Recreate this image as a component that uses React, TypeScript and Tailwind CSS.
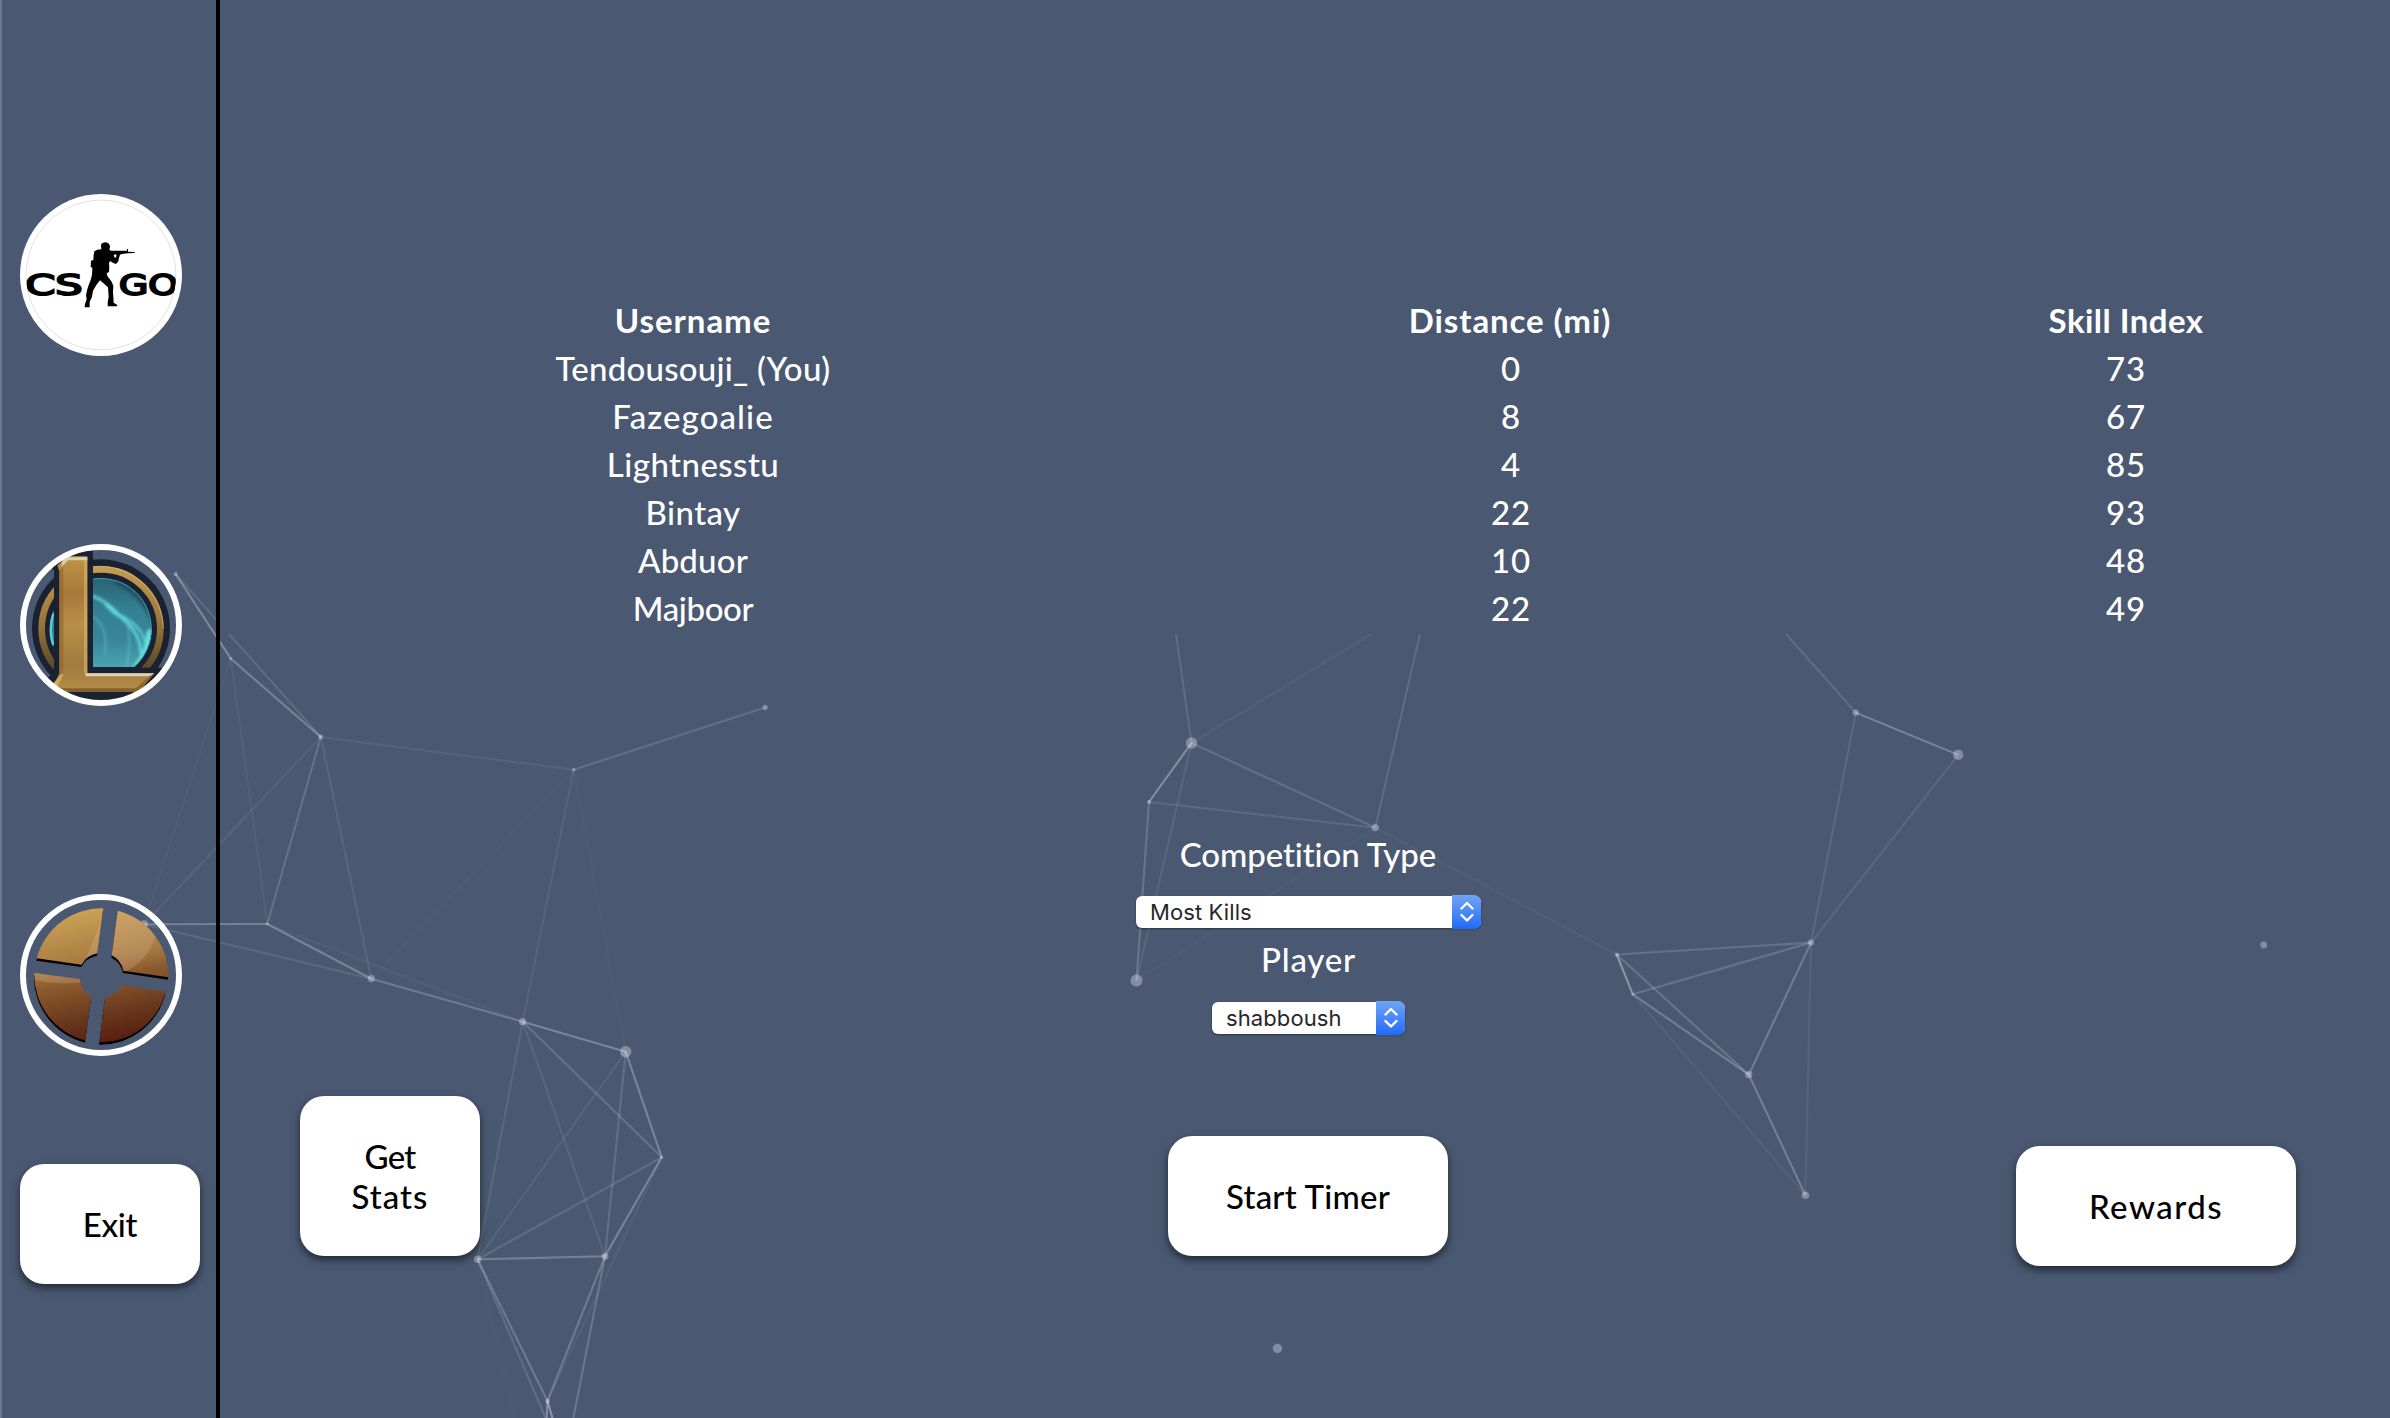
import React from "react";

type Point = [number, number];

const NODES: Record<string, Point> = {
  A: [175.6, 574], B: [230.8, 658.6], C: [320.8, 737], D: [573.7, 769.7], E: [765.2, 707.4],
  F: [267.3, 924], G: [371.3, 978.7], H: [144, 924.3], I: [522.7, 1021.7], J: [625.7, 1051.7],
  K: [661.7, 1157.3], L: [477.6, 1259.3], M: [605, 1256.3], N: [547.5, 1401], P: [1191.5, 743],
  Q: [1149, 802], R: [1375.3, 827.7], S: [1136.5, 980.5], T: [1616.7, 954.5], U: [1632.8, 994.3],
  V: [1811, 942.6], W: [1748.8, 1074.7], X: [1805.4, 1195.2], Y: [1855.8, 712.6], Z: [1958.3, 754.9],
  a: [2263.7, 945], b: [1277.4, 1348.5], p1: [1176, 634], p2: [1371.7, 634], p3: [1420, 634],
  p4: [1786, 634], o1: [546.5, 1420], o2: [553, 1420], o3: [573, 1420], o4: [515, 1420],
};

const DOTS: [string, number][] = [
  ["A", 2], ["B", 1.3], ["C", 2.4], ["D", 1.8], ["E", 2.6], ["F", 1.3], ["G", 3.6], ["H", 4], ["I", 3.6],
  ["J", 5.7], ["K", 1.5], ["L", 3.7], ["M", 3.4], ["N", 2.3], ["P", 5.7], ["Q", 2], ["R", 3.6], ["S", 6],
  ["T", 2], ["U", 1.2], ["V", 3.1], ["W", 3.6], ["X", 3.8], ["Y", 3.1], ["Z", 5.1], ["a", 3.4], ["b", 4.7],
];

const LINKS = "AB AC BC CD DE CH CF CG BF BH HF HG FG FI GI DG DI DJ IJ IK IL IM JK JL JM KL KM KN LM LN MN PQ PR QR QS PS RS RT TU TV TW UV UW UX VW VX WX VY VZ YZ".split(" ");

const EDGE_LINKS: [string, string, number][] = [
  ["P", "p1", 0.12], ["P", "p2", 0.05], ["R", "p3", 0.12], ["Y", "p4", 0.12],
  ["L", "o1", 0.13], ["L", "o4", 0.02], ["N", "o1", 0.3], ["N", "o2", 0.36], ["M", "o3", 0.18],
];

function Network() {
  return (
    <svg className="pointer-events-none absolute inset-0" width="2390" height="1418" viewBox="0 0 2390 1418">
      <g stroke="#fff" strokeWidth="2.1">
        {LINKS.map((k) => {
          const [x1, y1] = NODES[k[0]];
          const [x2, y2] = NODES[k[1]];
          const o = Math.max(0.018, 0.42 * (1 - Math.hypot(x1 - x2, y1 - y2) / 305));
          return <line key={k} x1={x1} y1={y1} x2={x2} y2={y2} strokeOpacity={o} />;
        })}
        {EDGE_LINKS.map(([p, q, o]) => (
          <line key={p + q} x1={NODES[p][0]} y1={NODES[p][1]} x2={NODES[q][0]} y2={NODES[q][1]} strokeOpacity={o} />
        ))}
      </g>
      <g fill="#fff" fillOpacity="0.32">
        {DOTS.map(([k, r]) => (
          <circle key={k} cx={NODES[k][0]} cy={NODES[k][1]} r={r} />
        ))}
      </g>
    </svg>
  );
}

function CsgoLogo() {
  return (
    <svg className="block size-full" viewBox="60 42 486 486">
      <circle cx="303" cy="285" r="243" fill="#fff" />
      <circle cx="303" cy="285" r="224.5" fill="none" stroke="#c4c7d2" strokeWidth="1.6" />
      <clipPath id="cs"><circle cx="303" cy="285" r="225" /></clipPath>
      <g clipPath="url(#cs)" fontFamily="DejaVu Sans" fontSize="86" fill="#000" stroke="#000" strokeWidth="6">
        <text x="76" y="345" textLength="172" lengthAdjust="spacingAndGlyphs">CS</text>
        <text x="357" y="345" textLength="177" lengthAdjust="spacingAndGlyphs">GO</text>
      </g>
      <path d="M303 196 C304 189 310 187 317 187 C325 188 330 193 330 201 L328 210 L334 212 L381 212 L381 207 L384 207 L384 215 L404 216 L404 219 L384 220 L366 222 L360 224 L357 234 L355 244 L348 252 L340 249 L330 243 L327 250 L328 262 L327 276 L320 280 L322 288 L334 304 L340 317 L339 336 L340 352 L341 368 L352 375 L351 379 L323 379 L323 368 L326 350 L324 322 L312 311 L300 301 L289 315 L279 332 L276 350 L269 366 L269 382 L254 382 L255 372 L260 358 L258 346 L262 328 L266 315 L272 300 L276 284 L277 263 L272 261 L273 242 L280 240 L281 225 L283 214 L292 209 L304 208 Z M341 226 L347 222 L350 228 L345 235 Z" fillRule="evenodd" />
    </svg>
  );
}

function LeagueLogo() {
  return (
    <svg className="block size-full" viewBox="60 42 486 486">
      <defs>
        <clipPath id="lc"><circle cx="303" cy="285" r="227" /></clipPath>
        <linearGradient id="ring" x1="0" y1="0" x2="0" y2="1">
          <stop offset="0" stopColor="#c39a50" /><stop offset="0.5" stopColor="#94703a" /><stop offset="0.85" stopColor="#554828" />
        </linearGradient>
        <linearGradient id="orb" x1="0" y1="0" x2="0" y2="1">
          <stop offset="0" stopColor="#2a6273" /><stop offset="0.3" stopColor="#348093" /><stop offset="0.6" stopColor="#3a8496" /><stop offset="0.9" stopColor="#4aa6b2" />
        </linearGradient>
        <linearGradient id="gold" x1="0" y1="0" x2="0" y2="1">
          <stop offset="0" stopColor="#be9546" /><stop offset="0.27" stopColor="#a87839" /><stop offset="0.5" stopColor="#b98e49" /><stop offset="0.8" stopColor="#a17b40" /><stop offset="1" stopColor="#b38c48" />
        </linearGradient>
        <clipPath id="oc"><path d="M278 144 H460 V411 H278 Z" /></clipPath>
        <clipPath id="ob"><circle cx="303" cy="296" r="152" /></clipPath>
        <filter id="soft"><feGaussianBlur stdDeviation="4" /></filter>
      </defs>
      <g clipPath="url(#lc)">
        <circle cx="303" cy="295" r="207" fill="#1a2232" />
        <circle cx="303" cy="296" r="178" fill="none" stroke="url(#ring)" strokeWidth="20" />
        <path d="M278 110 C395 98 488 190 490 296" fill="none" stroke="#dcbc7c" strokeWidth="2" />
        <circle cx="303" cy="296" r="152" fill="url(#orb)" />
        <g clipPath="url(#oc)">
          <g clipPath="url(#ob)">
            <path d="M360 130 C430 170 462 230 460 290 C440 240 410 190 340 160 Z" fill="#1d4a5c" opacity="0.8" filter="url(#soft)" />
            <g fill="none" stroke="#62e0e0" filter="url(#soft)" strokeLinecap="round">
              <path d="M276 198 C325 214 350 250 378 275 C415 310 425 345 425 400" strokeWidth="8" />
              <path d="M320 225 C340 245 345 250 360 258" strokeWidth="10" />
              <path d="M340 248 C405 270 434 310 436 345" strokeWidth="6" />
              <path d="M276 260 C312 275 322 320 314 370" strokeWidth="4" opacity="0.6" />
              <path d="M385 290 C392 340 386 380 380 411" strokeWidth="4" opacity="0.6" />
              <path d="M452 310 C450 350 440 380 412 411" strokeWidth="26" />
            </g>
            <circle cx="303" cy="296" r="151" fill="none" stroke="#45a6b5" strokeWidth="3" />
          </g>
        </g>
        <path d="M160 250 C149 280 150 320 160 345" fill="none" stroke="#56d0d8" strokeWidth="7" />
        <path d="M158 62 H279 V411 H405 L431 413 H500 L440 530 H120 L146 440 L162 430 V120 H158 Z" fill="#1a2232" />
        <path d="M172 107 L200 79 H262 V430 H463 L416 486 H175 L160 467 L178 430 V122 Z" fill="url(#gold)" />
        <path d="M190 82 H262 V91 H205 L184 110 Z" fill="#ddd0ae" />
        <path d="M262 84 V430 H252 V92 Z" fill="#d8b670" opacity="0.6" />
        <path d="M255 430 H463 L450 439 H258 Z" fill="#e0d3b4" />
        <path d="M178 120 L190 112 V430 L178 445 Z" fill="#93692f" opacity="0.7" />
        <path d="M178 475 H424 L416 486 H175 Z" fill="#86602c" />
        <path d="M463 430 L416 486 L408 474 L448 439 Z" fill="#8f6530" />
        <path d="M160 460 L186 430 L190 436 L170 474 Z" fill="#cfa860" />
      </g>
      <circle cx="303" cy="285" r="234" fill="none" stroke="#fff" strokeWidth="18" />
    </svg>
  );
}

function FortressLogo() {
  const shape =
    "M310 85 A202 202 0 0 0 110 235 L245 254 A66 66 0 0 1 292 220 Z M353 92 A202 202 0 0 1 505 292 L370 272 A66 66 0 0 0 335 226 Z M103 279 L239 297 A66 66 0 0 0 274 348 L256 481 A202 202 0 0 1 103 279 Z M365 316 L497 334 A200 200 0 0 1 298 487 L315 352 A66 66 0 0 0 365 316 Z";
  return (
    <svg className="block size-full" viewBox="60 42 486 486">
      <defs>
        <linearGradient id="tf" gradientUnits="userSpaceOnUse" x1="260" y1="85" x2="340" y2="487">
          <stop offset="0" stopColor="#cca254" /><stop offset="0.38" stopColor="#a87a42" /><stop offset="0.52" stopColor="#8b5b2d" /><stop offset="0.75" stopColor="#6e3c20" /><stop offset="1" stopColor="#561d12" />
        </linearGradient>
        <clipPath id="tc"><path d={shape} /></clipPath>
        <filter id="blur"><feGaussianBlur stdDeviation="2.2" /></filter>
      </defs>
      <path d={shape} fill="#000" transform="translate(-1 7)" filter="url(#blur)" />
      <path d={shape} fill="url(#tf)" />
      <path d="M330 60 H440 C480 120 475 160 455 195 C435 240 405 266 360 280 C250 320 170 314 90 298 V255 H250 Z" fill="#e0c0a8" opacity="0.24" clipPath="url(#tc)" />
      <circle cx="303" cy="285" r="234" fill="none" stroke="#fff" strokeWidth="18" />
    </svg>
  );
}

function Button({ className, children }: { className: string; children: React.ReactNode }) {
  return (
    <button
      className={`flex shrink-0 items-center justify-center rounded-[24px] bg-white text-[33px] leading-10 font-medium text-black shadow-[0_4px_8px_rgba(0,0,0,0.55)] ${className}`}
    >
      {children}
    </button>
  );
}

function Select({ value, className }: { value: string; className: string }) {
  return (
    <div className={`relative flex h-8 items-center rounded-[6px] bg-white pl-3.5 font-['Inter'] text-[22px] leading-8 font-normal text-[#262626] shadow-[0_1px_2px_rgba(0,0,0,0.45)] ${className}`}>
      {value}
      <div className="absolute -top-px right-0 flex h-[34px] w-[29px] items-center justify-center rounded-r-[7px] bg-linear-to-b from-[#6fa3f5] to-[#216af8]">
        <svg width="14" height="22" viewBox="0 0 14 22" fill="none" stroke="#fff" strokeWidth="2.4" strokeLinecap="round" strokeLinejoin="round">
          <path d="M1.5 7.5 L7 2 L12.5 7.5 M1.5 14 L7 19.5 L12.5 14" />
        </svg>
      </div>
    </div>
  );
}

const ROWS: [string, string, string, string][] = [
  ["Tendousouji_ (You)", "0", "73", "tracking-[0.24px]"],
  ["Fazegoalie", "8", "67", "tracking-[1.1px]"],
  ["Lightnesstu", "4", "85", "tracking-[0.45px]"],
  ["Bintay", "22", "93", "tracking-[0.43px]"],
  ["Abduor", "10", "48", "tracking-[0.18px]"],
  ["Majboor", "22", "49", "tracking-[-0.35px]"],
];

export default function App() {
  return (
    <div className="relative flex h-[1418px] w-[2390px] overflow-hidden bg-[#4a5872] font-['Lato',sans-serif] text-[33px] font-medium text-white">
      <Network />
      <aside className="relative flex w-[220px] shrink-0 flex-col border-r-4 border-l-2 border-r-black border-l-[#6d788e] pt-[194px] pl-[18px]">
        <div className="flex flex-col gap-[188px]">
          <div className="size-[162px]"><CsgoLogo /></div>
          <div className="size-[162px]"><LeagueLogo /></div>
          <div className="size-[162px]"><FortressLogo /></div>
        </div>
        <Button className="mt-[108px] h-[120px] w-[180px] tracking-[-0.35px]">Exit</Button>
      </aside>

      <main className="relative flex-1">
        <section className="h-[634px] bg-[#4a5872] pt-[296px]">
          <table className="w-full table-fixed text-center leading-[48px]">
            <colgroup>
              <col className="w-[946px]" />
              <col className="w-[688px]" />
              <col />
            </colgroup>
            <thead>
              <tr className="h-12">
                <th className="p-0 font-bold tracking-[0.98px]">Username</th>
                <th className="p-0 font-bold tracking-[0.9px]">Distance (mi)</th>
                <th className="p-0 pl-2 font-bold tracking-[0.46px]">Skill Index</th>
              </tr>
            </thead>
            <tbody>
              {ROWS.map(([name, distance, skill, spacing]) => (
                <tr key={name} className="h-12">
                  <td className={`p-0 ${spacing}`}>{name}</td>
                  <td className="p-0 pl-0.5 tracking-[0.8px]">{distance}</td>
                  <td className="p-0 pl-2 tracking-[0.8px]">{skill}</td>
                </tr>
              ))}
            </tbody>
          </table>
        </section>

        <section className="flex items-start pr-[94px] pl-20">
          <Button className="mt-[462px] h-40 w-[180px] px-10">
            <span>
              <span className="tracking-[-0.7px]">Get</span> <br />
              <span className="tracking-[1.06px]">Stats</span>
            </span>
          </Button>
          <div className="ml-[656px] flex w-[345px] flex-col items-center pt-[200px]">
            <label className="pr-px leading-10 tracking-[-0.1px]">Competition Type</label>
            <Select value="Most Kills" className="mt-[22px] w-[345px] tracking-[0.1px]" />
            <label className="mt-[11px] leading-10 tracking-[0.85px]">Player</label>
            <Select value="shabboush" className="mt-[23px] w-[193px] tracking-[0.1px]" />
            <Button className="mt-[102px] mr-px h-[120px] w-[280px] tracking-[0.24px]">Start Timer</Button>
          </div>
          <Button className="mt-[512px] ml-auto h-[120px] w-[280px] tracking-[1.5px]">Rewards</Button>
        </section>
      </main>
    </div>
  );
}
